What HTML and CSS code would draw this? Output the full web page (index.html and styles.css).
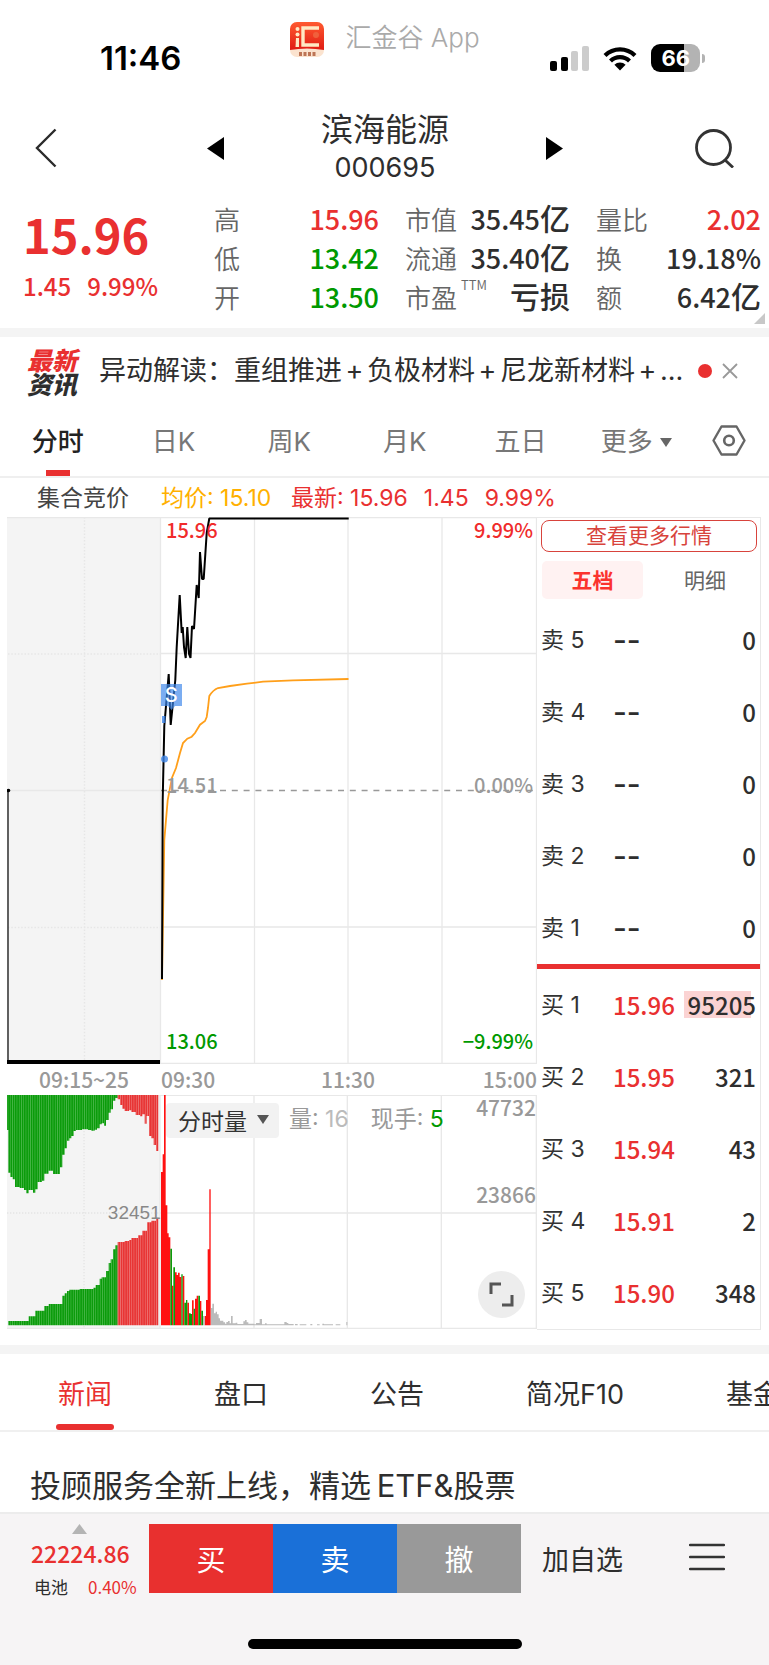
FILE: index.html
```html
<!DOCTYPE html>
<html lang="zh-CN">
<head>
<meta charset="utf-8">
<meta name="viewport" content="width=device-width, initial-scale=1">
<title>滨海能源 000695</title>
<link rel="stylesheet" href="styles.css">
</head>
<body>
<div class="status">
  <div class="clock">11:46</div>
  <div class="app">
    <svg class="app-logo" viewBox="0 0 36 37" aria-hidden="true">
      <defs><linearGradient id="lg" x1="0" y1="0" x2="0" y2="1"><stop offset="0" stop-color="#ff5a30"/><stop offset="1" stop-color="#e01c14"/></linearGradient></defs>
      <rect x="1" y="1" width="34" height="35" rx="7" fill="#fbe3cf"/>
      <path d="M1 29V8a7 7 0 0 1 7-7h20a7 7 0 0 1 7 7v21q-17-3-34 0z" fill="url(#lg)"/>
      <path d="M30 7H14v17h16" fill="none" stroke="#ffe9c4" stroke-width="3.400"/>
      <circle cx="8.500" cy="8" r="2" fill="#ffe9c4"/><circle cx="8.500" cy="13.500" r="2" fill="#ffe9c4"/>
      <path d="M7 17h3v9H6.500z" fill="#ffe9c4"/><circle cx="27" cy="14" r="3" fill="#f0603c"/>
      <path d="M10 31h3v4h-3zM14.500 31h3v4h-3zM19 31h3v4h-3zM23.500 31h3v4h-3z" fill="#a8502e" opacity=".75"/>
    </svg>
    <span>汇金谷 App</span>
  </div>
  <div class="signals">
    <svg width="39" height="25" viewBox="0 0 39 25" aria-hidden="true"><rect y="15" width="7" height="10" rx="2"/><rect x="11" y="11" width="7" height="14" rx="2"/><rect x="21" y="5" width="7" height="20" rx="2" fill="#ccc"/><rect x="32" width="7" height="25" rx="2" fill="#ccc"/></svg>
    <svg width="34" height="25" viewBox="0 0 34 25" aria-hidden="true"><path d="M2 9.500a21.500 21.500 0 0 1 30 0M7.500 15a13.500 13.500 0 0 1 19 0" fill="none" stroke="#000" stroke-width="4.200"/><path d="M17 24.500l-5.600-5.800a8 8 0 0 1 11.200 0z"/></svg>
    <div class="battery"><span>66</span></div>
  </div>
</div>

<header class="nav">
  <button class="plain back" aria-label="返回"><svg width="22" height="40" viewBox="0 0 22 40"><path d="M20.500 1.500L2 20l18.500 18.500" fill="none" stroke="#2b2b2b" stroke-width="2.400"/></svg></button>
  <div class="stock">
    <button class="plain" aria-label="上一只"><svg width="17" height="23" viewBox="0 0 17 23"><path d="M17 0v23L0 11.500z"/></svg></button>
    <h1>滨海能源<small>000695</small></h1>
    <button class="plain" aria-label="下一只"><svg width="17" height="23" viewBox="0 0 17 23"><path d="M0 0v23l17-11.500z"/></svg></button>
  </div>
  <button class="plain search" aria-label="搜索"><svg width="40" height="40" viewBox="0 0 40 40"><circle cx="18.500" cy="19.500" r="17" fill="none" stroke="#333" stroke-width="2.800"/><path d="M29.500 31.500l8.500 8" stroke="#333" stroke-width="2.800"/></svg></button>
</header>

<section class="quote">
  <div class="last"><strong>15.96</strong><p><span>1.45</span><span>9.99%</span></p></div>
  <dl>
    <div><dt>高</dt><dd class="up">15.96</dd></div>
    <div><dt>低</dt><dd class="down">13.42</dd></div>
    <div><dt>开</dt><dd class="down">13.50</dd></div>
  </dl>
  <dl>
    <div><dt>市值</dt><dd>35.45<span>亿</span></dd></div>
    <div><dt>流通</dt><dd>35.40<span>亿</span></dd></div>
    <div><dt>市盈<sup>TTM</sup></dt><dd><span>亏损</span></dd></div>
  </dl>
  <dl>
    <div><dt>量比</dt><dd class="up">2.02</dd></div>
    <div><dt>换</dt><dd>19.18%</dd></div>
    <div><dt>额</dt><dd>6.42<span>亿</span></dd></div>
  </dl>
  <svg class="corner" width="11" height="11" viewBox="0 0 11 11" aria-hidden="true"><path d="M11 0v11H0z" fill="#c8c8c8"/></svg>
</section>
<div class="band"></div>

<section class="headline">
  <div class="badge"><span>最新</span><span>资讯</span></div>
  <a href="#" class="headline-text">异动解读：重组推进<i>+</i>负极材料<i>+</i>尼龙新材料<i>+</i>...</a>
  <span class="dot"></span>
  <button class="plain" aria-label="关闭"><svg width="16" height="16" viewBox="0 0 16 16"><path d="M1 1l14 14M15 1L1 15" stroke="#999" stroke-width="1.800"/></svg></button>
</section>

<nav class="periods">
  <div class="period-list">
    <button class="plain active">分时</button><button class="plain">日K</button><button class="plain">周K</button><button class="plain">月K</button><button class="plain">五日</button>
    <button class="plain more">更多<svg width="12" height="9" viewBox="0 0 12 9"><path d="M0 0h12L6 9z" fill="#666"/></svg></button>
  </div>
  <button class="plain" aria-label="设置"><svg width="34" height="31" viewBox="0 0 34 31"><path d="M9.500 1.500h15l8 14-8 14h-15l-8-14z" fill="none" stroke="#666" stroke-width="2.400" stroke-linejoin="round"/><circle cx="17" cy="15.500" r="4.800" fill="none" stroke="#666" stroke-width="2.600"/></svg></button>
</nav>

<div class="summary"><span class="auction">集合竞价</span><span class="avg">均价: 15.10</span><span class="now"><b>最新: 15.96</b><b>1.45</b><b>9.99%</b></span></div>

<main class="board">
  <div class="charts">
    <div class="plot">
      <svg viewBox="7 517 530 547" role="img" aria-label="分时走势">
        <rect x="7" y="517" width="153" height="547" fill="#f4f4f4"/>
        <path d="M84.500 517v547M8 654h152M8 927.500h152" stroke="#e6e6e6" stroke-width="1.500" stroke-dasharray="1.500 1.800"/>
        <path d="M7 517.500h530M160.500 517v547M254.500 517v547M348 517v547M442 517v547M536.500 517v547M160 653.500h377M8 790.500h152M160 927h377M160 1063.500h377" fill="none" stroke="#e8e8e8" stroke-width="1.300"/>
        <path d="M161 790.500h376" stroke="#999" stroke-width="1.300" stroke-dasharray="6 5.800"/>
        <path d="M8 790v273" stroke="#222" stroke-width="1.400"/><circle cx="8.500" cy="790.500" r="1.800"/>
        <path d="M7 1062.500h153" stroke="#000" stroke-width="5"/>
        <path d="M162 980L164.300 840L167.700 800L172 777.700L176 768L180 753L183 743L187.300 738.700L191.700 736.700L195 733L200 724.700L205 721L206.700 717L208 708L209.300 696Q213 690 218 688L230 686L247 683.700L263 681.700L293 680.300L348.500 679" fill="none" stroke="#ff9f1a" stroke-width="1.800"/>
        <path d="M162 979L162.700 800L164.300 726L168.700 674L170.700 725L175.300 680L176.700 647L179.700 595L181.700 633L182.700 627L184 647L185.700 658L187.300 627L189 654L190.500 658L192 626L194 629L196.700 585L198.700 598L200 552L202 579H203.700L206.700 533L209.300 518.500H348.700" fill="none" stroke="#000" stroke-width="2" stroke-linejoin="bevel"/>
        <g fill="#3d86ea"><path d="M162 716h3.500v7H162z" opacity=".8"/><circle cx="164.500" cy="759" r="3.500" opacity=".8"/><path d="M161 684h21v22h-7l-3.500 4-3.500-4h-7z" opacity=".68"/></g>
      </svg>
      <span class="mark signal">S</span>
      <span class="mark tl up">15.96</span><span class="mark tr up">9.99%</span>
      <span class="mark ml">14.51</span><span class="mark mr">0.00%</span>
      <span class="mark bl down">13.06</span><span class="mark br down">−9.99%</span>
    </div>
    <div class="times"><span>09:15~25</span><span>09:30</span><span>11:30</span><span>15:00</span></div>
    <div class="plot volume">
      <svg viewBox="22 45 1590 702" role="img" aria-label="成交量">
        <defs>
          <pattern id="g" width="6.750" height="10" x="26" patternUnits="userSpaceOnUse"><path d="M0 0h6.750v10H0z" fill="#0b9b0b"/><path d="M5 0h1.750v10H5z" fill="#58be58"/></pattern>
          <pattern id="r" width="6.750" height="10" x="26" patternUnits="userSpaceOnUse"><path d="M0 0h6.750v10H0z" fill="#e83434"/><path d="M5 0h1.750v10H5z" fill="#ee8080"/></pattern>
        </defs>
        <path d="M22 45h459v702H22z" fill="#f4f4f4"/>
        <path d="M253 45v702M22 399h459" stroke="#e4e4e4" stroke-width="4" stroke-dasharray="4 5"/>
        <path d="M22 46H1612M481 399H1612M22 745H1612M481 45v702M763 45v702M1043 45v702M1325 45v702M1610 45v702" stroke="#e8e8e8" stroke-width="4"/>
        <path d="M22 45V150H26V278H32V291H39V298H46V321H60V324H73V330H80V340H87V330H100V338H107V328H114V306H127V302H134V281H147V272H160V282H181V262H188V224H195V205H202V182H209V175H215V168H222V153H229V150H247V148H265V150H275V152H285V149H292V145H300V133H306V130H313V137H319V120H327V98H333V88H340V62H347V54H354V45zM26 736V723H87V709H107V692H134V678H147V672H188V647H195V640H202V633H209V629H240V627H281V623H288V615H300V596H306V592H319V573H327V549H333V538H340V508H347V496H354V736z" fill="url(#g)"/>
        <path d="M354 45V58H361V75H368V86H375V93H388V91H395V96H408V105H421V109H428V103H435V131H441V108H448V168H455V175H462V195H469V213H476V45zM354 736V486H375V483H388V480H395V474H415V466H428V452H442V427H455V422H469V414H476V736z" fill="url(#r)"/>
        <path d="M484 736V276H489V223H493V45H498V376H503V460H507V472H512V736zM517 736V617H521V736zM526 736V577H531V585H535V578H540V591H545V736zM549 736V588H554V736zM563 736V668H568V736zM577 736V661H582V736zM586 736V656H591V647H596V736zM601 736V663H605V736zM615 736V708H619V660H624V508H629V328H633V736z" fill="#f11"/>
        <path d="M512 736V506H517V736zM521 736V562H526V736zM545 736V583H549V736zM554 736V668H559V660H563V736zM568 736V700H573V702H577V736zM582 736V686H586V736zM596 736V647H601V736zM605 736V692H610V736z" fill="#0b9b0b"/>
        <path d="M610 736V708H615V736zM634 736V684H638V671H643V700H648V695H652V703H657V715H661V722H671V727H676V731H680V726H685V723H690V730H694V708H699V730H708V728H713V732H731V724H736V720H741V727H746V731H764V733H769V729H780V717H787V733H796V730H801V733H854V726H861V729H866V732H882V736zM886 736V732H894V736zM900 736V733H920V736zM932 736V732H938V736zM952 736V733H960V736zM968 736V731H973V733H1000V736zM1008 736V733H1022V736zM1040 736V726H1043V736z" fill="#bbb"/>
      </svg>
      <div class="vol-head"><button class="vol-type">分时量<svg width="12" height="9" viewBox="0 0 12 9"><path d="M0 0h12L6 9z" fill="#555"/></svg></button><span>量: <em>16</em></span><span>现手: <b class="down">5</b></span></div>
      <span class="mark auction-max">32451</span>
      <span class="mark vol-max">47732</span><span class="mark vol-mid">23866</span>
      <button class="expand" aria-label="全屏"><svg width="25" height="25" viewBox="0 0 25 25"><path d="M2 12V2h10M23 13v10H13" fill="none" stroke="#555" stroke-width="3"/></svg></button>
    </div>
  </div>

  <aside class="book">
    <button class="all">查看更多行情</button>
    <div class="book-tabs"><button class="on">五档</button><button>明细</button></div>
    <table class="asks">
      <tr><th>卖 5</th><td>--</td><td>0</td></tr>
      <tr><th>卖 4</th><td>--</td><td>0</td></tr>
      <tr><th>卖 3</th><td>--</td><td>0</td></tr>
      <tr><th>卖 2</th><td>--</td><td>0</td></tr>
      <tr><th>卖 1</th><td>--</td><td>0</td></tr>
    </table>
    <table class="bids">
      <tr><th>买 1</th><td>15.96</td><td><mark>95205</mark></td></tr>
      <tr><th>买 2</th><td>15.95</td><td>321</td></tr>
      <tr><th>买 3</th><td>15.94</td><td>43</td></tr>
      <tr><th>买 4</th><td>15.91</td><td>2</td></tr>
      <tr><th>买 5</th><td>15.90</td><td>348</td></tr>
    </table>
  </aside>
</main>
<div class="band"></div>

<nav class="sections"><a href="#" class="active">新闻</a><a href="#">盘口</a><a href="#">公告</a><a href="#">简况F10</a><a href="#">基金</a></nav>
<h2 class="promo">投顾服务全新上线，精选&thinsp;ETF&amp;股票</h2>

<footer class="footer">
  <div class="trade">
    <div class="index">
      <svg width="15" height="10" viewBox="0 0 15 10" aria-hidden="true"><path d="M7.500 0L15 10H0z" fill="#b4b4b4"/></svg>
      <strong>22224.86</strong>
      <p><span>电池</span><span class="up">0.40%</span></p>
    </div>
    <div class="actions"><button class="buy">买</button><button class="sell">卖</button><button class="cancel">撤</button></div>
    <button class="plain add">加自选</button>
    <button class="plain menu" aria-label="菜单"><svg width="36" height="28" viewBox="0 0 36 28"><path d="M1 2h34M1 14h34M1 26h34" stroke="#333" stroke-width="2.400" stroke-linecap="round"/></svg></button>
  </div>
  <div class="home"></div>
</footer>
</body>
</html>
```
FILE: styles.css
```css
:root {
  --red: #e93030;
  --green: #009900;
  --ink: #2e2e2e;
  --gray: #666;
  --num: "Noto Sans CJK SC", "Noto Sans", sans-serif;
}
* { box-sizing: border-box; }
body {
  margin: 0;
  background: #fff;
  color: var(--ink);
  font-family: Inter, "Noto Sans CJK SC", sans-serif;
  overflow-x: hidden;
}
h1, h2, p, dl, dd { margin: 0; font-weight: 400; }
svg { display: block; flex: none; }
button { font-family: inherit; color: inherit; padding: 0; border: 0; background: none; }
a { color: inherit; text-decoration: none; }
.plain { flex: none; }
.up { color: var(--red); }
.down { color: var(--green); }
.band { height: 9px; background: #f4f4f4; }

.status {
  display: grid;
  grid-template-columns: 1fr auto 1fr;
  height: 100px;
  padding-top: 20px;
}
.clock { padding: 18px 8px 0 0; text-align: center; color: #000; font-size: 33px; line-height: 40px; font-weight: 600; }
.app { display: flex; gap: 20px; height: 38px; align-items: center; color: #aaa; font-size: 26px; line-height: 32px; font-weight: 350; white-space: nowrap; }
.app span { padding-bottom: 3px; }
.app-logo { width: 36px; height: 37px; }
.signals { display: flex; justify-content: center; align-items: center; gap: 14px; height: 76px; padding-left: 2px; }
.battery {
  position: relative;
  width: 49px;
  height: 28px;
  border-radius: 9px;
  background: linear-gradient(90deg, #000 67%, #b3b3b3 67%);
  color: #fff;
  font-size: 22px;
  line-height: 28px;
  font-weight: 700;
  text-align: center;
}
.battery::after { content: ""; position: absolute; left: 51px; top: 10px; width: 3px; height: 9px; border-radius: 0 3px 3px 0; background: #b3b3b3; }

.nav { display: grid; grid-template-columns: 1fr auto 1fr; align-items: center; height: 96px; padding: 0 34px 0 35px; }
.back { justify-self: start; }
.search { justify-self: end; }
.stock { display: flex; align-items: center; gap: 97px; }
h1 { width: 128px; padding-bottom: 2px; text-align: center; font-size: 32px; line-height: 42px; white-space: nowrap; }
h1 small { display: block; font-size: 27px; line-height: 34px; }

.quote {
  position: relative;
  display: grid;
  grid-template-columns: repeat(4, 1fr);
  gap: 26px;
  padding: 3px 8px 10px 23px;
  height: 132px;
}
.last { color: var(--red); font-family: var(--num); }
.last strong { display: block; font-size: 47px; line-height: 70px; font-weight: 700; }
.last p { display: flex; gap: 16px; font-size: 24px; line-height: 34px; font-weight: 500; }
.quote dl div { display: flex; justify-content: space-between; height: 39px; line-height: 39px; white-space: nowrap; }
dt { position: relative; font-size: 26px; color: var(--gray); font-family: var(--num); font-weight: 350; }
dt sup { position: absolute; left: 100%; top: 0; padding-left: 4px; font-size: 13px; line-height: 16px; }
dd { font-size: 27px; font-weight: 500; font-family: var(--num); }
dd span { font-size: 30px; line-height: 30px; }
.corner { position: absolute; right: 4px; bottom: 4px; }

.headline { display: flex; align-items: center; height: 68px; padding: 0 31px 0 27px; }
.badge { width: 52px; margin-right: 20px; font-size: 25px; line-height: 24px; font-weight: 900; font-style: italic; font-family: "Noto Sans CJK SC", sans-serif; }
.badge span { display: block; }
.badge span:first-child { color: var(--red); }
.headline-text { flex: 1; overflow: hidden; white-space: nowrap; font-size: 27px; line-height: 40px; }
.headline-text i { display: inline-block; width: 25px; text-align: center; font-style: normal; }
.dot { flex: none; width: 14px; height: 14px; margin: 0 10px; border-radius: 50%; background: var(--red); }

.periods { display: flex; align-items: center; gap: 18px; height: 73px; padding-right: 23px; border-bottom: 2px solid #efefef; }
.period-list { flex: 1; display: grid; grid-template-columns: repeat(6, 1fr); height: 71px; }
.period-list button { position: relative; padding-top: 3px; font-size: 26px; line-height: 40px; color: #777; }
.period-list .active { color: #222; font-weight: 500; }
.period-list .active::after { content: ""; position: absolute; left: 50%; bottom: 0; width: 24px; height: 6px; margin-left: -12px; background: var(--red); }
.more { display: flex; align-items: center; justify-content: center; gap: 7px; }

.summary { display: flex; height: 39px; padding-left: 37px; font-size: 23px; line-height: 40px; white-space: nowrap; }
.summary b { font-weight: 400; margin-right: 16px; }
.auction { width: 124px; color: #444; }
.avg { width: 130px; color: #ffb000; }
.now { color: var(--red); }

.board { display: grid; grid-template-columns: 530fr 224fr; margin: 0 8px 15px 7px; }
.plot { position: relative; }
.plot > svg { width: 100%; height: auto; }
.mark { position: absolute; font-family: var(--num); font-size: 21px; line-height: 24px; font-weight: 500; color: #999; white-space: nowrap; }
.mark.up { color: #f02b2b; }
.mark.down { color: var(--green); }
.tl, .tr, .ml, .mr, .bl, .br { font-size: 20px; }
.tl, .ml, .bl { left: 30%; }
.tr, .mr, .br { right: 4px; }
.tl, .tr { top: 1px; }
.ml, .mr { top: 256px; }
.bl, .br { bottom: 11px; }
.signal { left: 29%; top: 166px; width: 21px; text-align: center; color: #fff; font-family: Inter, sans-serif; font-size: 20px; }
.times { display: grid; grid-template-columns: 154fr 95fr 184fr 97fr; height: 31px; line-height: 30px; font-family: var(--num); font-size: 21px; font-weight: 500; color: #999; }
.times span:nth-child(odd) { text-align: center; }
.times span:last-child { text-align: right; }
.vol-head { position: absolute; left: 30%; top: 8px; display: flex; align-items: center; gap: 22px; height: 35px; color: #999; font-size: 23px; line-height: 32px; white-space: nowrap; }
.vol-head span { padding-bottom: 3px; }
.vol-head em { font-style: normal; color: #bbb; }
.vol-head b { font-weight: 400; }
.vol-head button { margin-right: -12px; }
.vol-type { display: flex; align-items: center; gap: 10px; height: 35px; padding: 0 10px 2px 12px; border-radius: 4px; background: #f2f2f2; color: #333; font-size: 23px; }
.auction-max { right: 71%; top: 106px; font-family: "Liberation Sans", sans-serif; font-size: 19px; font-weight: 400; color: #888; }
.vol-max { right: 1px; top: 0; }
.vol-mid { right: 1px; top: 87px; }
.expand { position: absolute; right: 12px; bottom: 11px; display: grid; place-items: center; width: 47px; height: 47px; border-radius: 50%; background: #ededed; }

.book { border: 1px solid #e8e8e8; border-left: 0; }
.all { display: block; width: calc(100% - 7px); height: 32px; margin: 2px 3px 9px 4px; border: 1px solid #d8433c; border-radius: 8px; color: #d8433c; font-size: 21px; line-height: 28px; }
.book-tabs { display: grid; grid-template-columns: 101px 1fr; gap: 14px; padding: 0 7px 0 5px; }
.book-tabs button { height: 38px; padding-bottom: 2px; font-size: 21px; color: var(--gray); }
.book-tabs .on { border-radius: 5px; background: #fff2f2; color: #fb332e; font-weight: 700; }
.book table { width: 100%; border-collapse: collapse; table-layout: fixed; }
.book tr { height: 72px; }
.book th, .book td { padding: 0; line-height: 30px; }
.book th { width: 76px; padding-left: 4px; text-align: left; font-size: 23px; font-weight: 400; color: #333; }
.book td { font-family: var(--num); font-size: 24px; font-weight: 500; }
.book td:nth-child(2) { width: 64px; }
.book td:last-child { padding-right: 4px; text-align: right; }
.asks { margin-top: 5px; border-bottom: 5px solid var(--red); }
.asks tr:last-child { height: 74px; }
.asks td:nth-child(2) { font-family: Inter, sans-serif; font-size: 30px; }
.bids td:nth-child(2) { color: var(--red); }
mark { padding: 0 0 0 4px; background: linear-gradient(90deg, #fbd3d3 93%, transparent 93%); color: inherit; display: inline-block; line-height: 27px; }

.sections { display: flex; gap: 102px; height: 78px; padding-left: 58px; overflow: hidden; border-bottom: 2px solid #f0f0f0; font-size: 27px; line-height: 82px; white-space: nowrap; }
.sections a { position: relative; }
.sections .active { color: var(--red); }
.sections .active::after { content: ""; position: absolute; left: -2px; right: -2px; bottom: 0; height: 6px; border-radius: 3px; background: var(--red); }
.promo { padding: 31px 30px 3px; font-size: 31px; line-height: 46px; white-space: nowrap; }

.footer { border-top: 2px solid #ececec; background: #f6f4f5; padding-bottom: 16px; }
.trade { display: grid; grid-template-columns: 149px 372px 1fr 80px; align-items: start; padding-top: 10px; }
.index { padding-left: 31px; font-family: var(--num); }
.index svg { margin-left: 41px; }
.index strong { display: block; font-size: 23px; line-height: 38px; font-weight: 500; color: var(--red); }
.index p { display: flex; gap: 20px; padding-left: 3px; font-size: 17px; line-height: 30px; }
.actions { display: grid; grid-template-columns: repeat(3, 1fr); }
.actions button { height: 69px; color: #fff; font-size: 29px; }
.buy { background: #e8302f; }
.sell { background: #1a70d8; }
.cancel { background: #999; }
.add { justify-self: start; margin-left: 21px; height: 69px; font-size: 27px; }
.menu { height: 66px; }
.home { width: 274px; height: 10px; margin: 37px auto 0; border-radius: 5px; background: #000; }
```
